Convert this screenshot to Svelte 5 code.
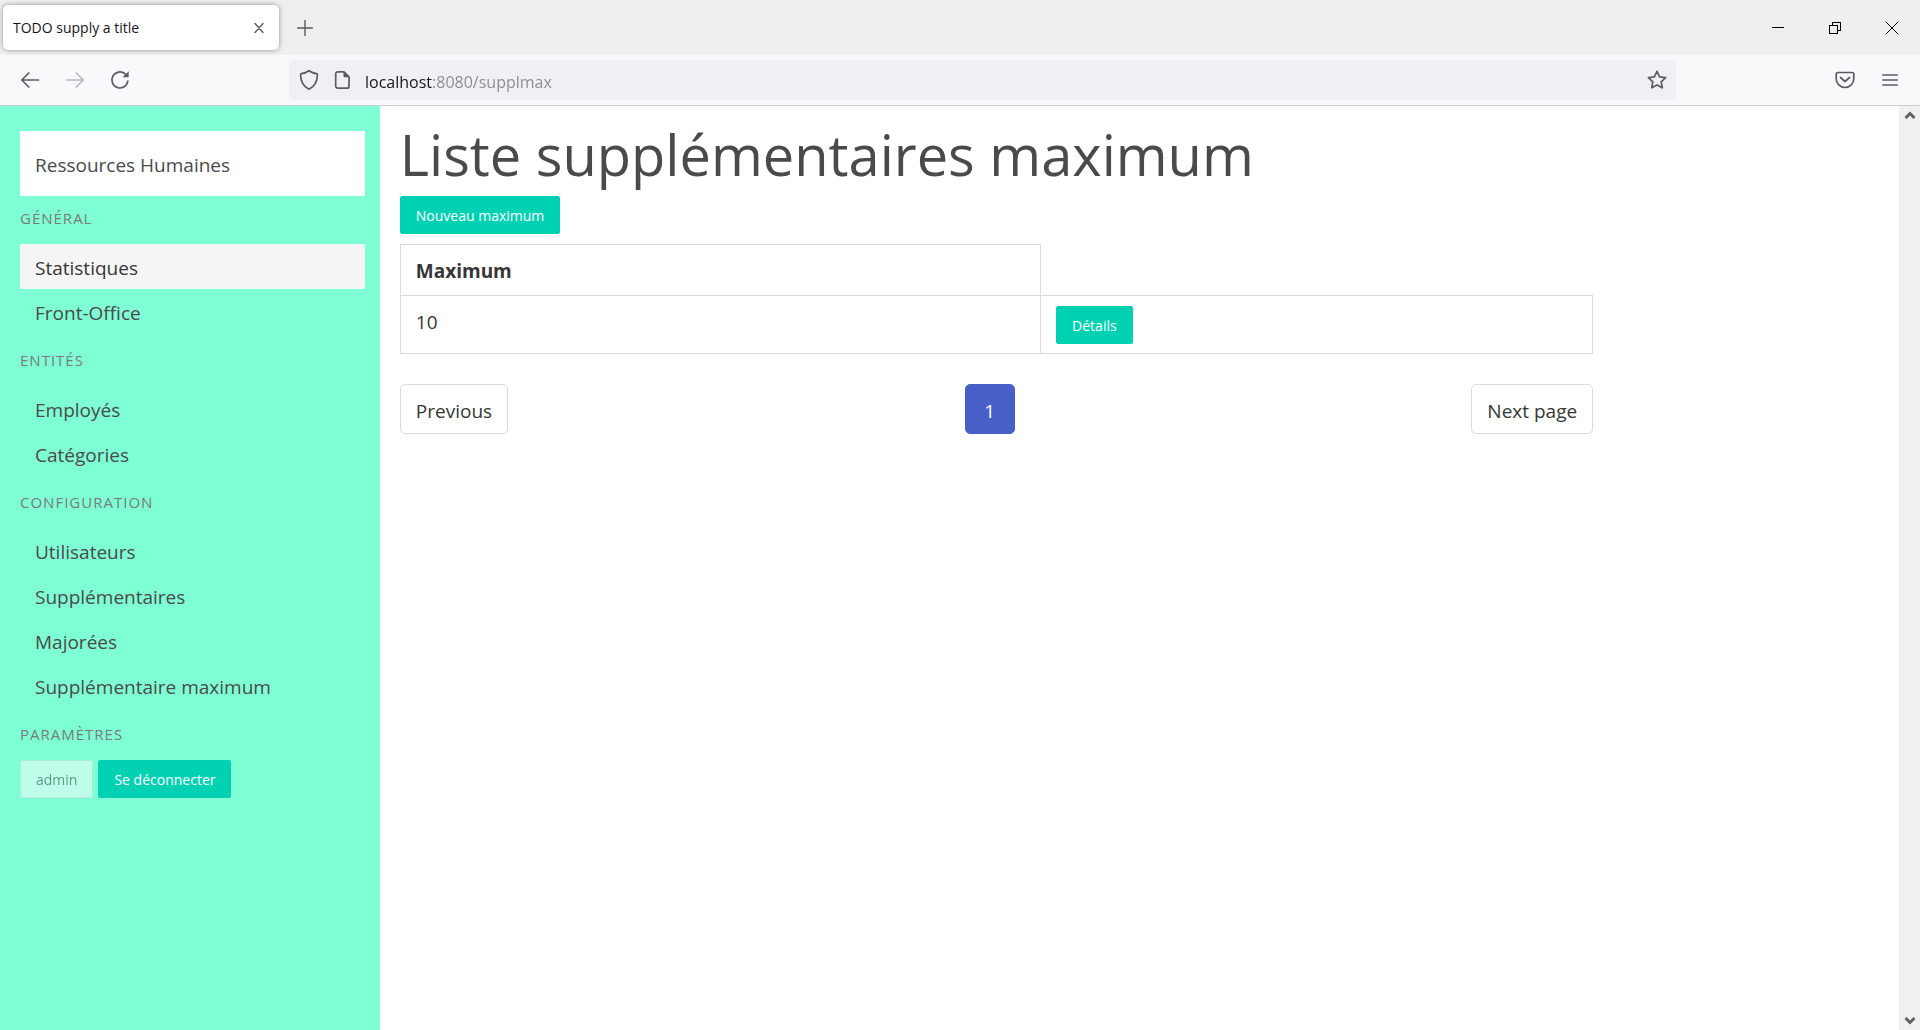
<script>
  const groups = [
    { title: 'Général', items: ['Statistiques', 'Front-Office'] },
    { title: 'Entités', items: ['Employés', 'Catégories'] },
    {
      title: 'Configuration',
      items: ['Utilisateurs', 'Supplémentaires', 'Majorées', 'Supplémentaire maximum'],
    },
  ];
  const rows = [10];
  let active = $state('Statistiques');
  let address = $state('localhost:8080/supplmax');
</script>

<div class="browser">
  <header class="tabstrip">
    <div class="tab">
      <span>TODO supply a title</span>
      <button class="icon" aria-label="Close tab">
        <svg width="10" height="10" viewBox="0 0 10 10"><path d="M1 .5l8 9M9 .5l-8 9" /></svg>
      </button>
    </div>
    <button class="icon plus" aria-label="New tab">
      <svg width="16" height="16" viewBox="0 0 16 16"><path d="M8 .5v15M.5 8h15" /></svg>
    </button>
    <div class="window-controls">
      <button class="icon" aria-label="Minimize">
        <svg width="14" height="14" viewBox="0 0 14 14" shape-rendering="crispEdges"><path d="M1 6.500h12" /></svg>
      </button>
      <button class="icon" aria-label="Restore">
        <svg width="14" height="14" viewBox="0 0 14 14" shape-rendering="crispEdges"><path d="M1.500 4.500h8v8h-8zM4.500 4.500v-3h8v8h-3" /></svg>
      </button>
      <button class="icon" aria-label="Close window">
        <svg width="14" height="14" viewBox="0 0 14 14"><path d="M.7.700l12.600 12.600M13.300.7L.7 13.300" /></svg>
      </button>
    </div>
  </header>

  <nav class="toolbar" aria-label="Browser">
    <button class="icon" aria-label="Back">
      <svg width="20" height="20" viewBox="0 0 20 20"><path d="M18.500 10H1.800M8.800 3l-7 7 7 7" /></svg>
    </button>
    <button class="icon" aria-label="Forward" disabled>
      <svg width="20" height="20" viewBox="0 0 20 20"><path d="M1.500 10h16.700M11.200 3l7 7-7 7" /></svg>
    </button>
    <button class="icon" aria-label="Reload">
      <svg width="20" height="20" viewBox="0 0 20 20">
        <path d="M17.800 11a8 8 0 1 1-2.600-7" /><path class="fill" d="M18.700 1.200v6.100h-6.100z" />
      </svg>
    </button>
    <label class="urlbar">
      <svg width="20" height="22" viewBox="0 0 20 22">
        <path d="M10 1.800c2.300 1.600 5 2.600 7.600 2.900.6.100.8.500.8 1 0 6.300-2.200 11.300-8.400 14.600C3.800 17 1.600 12 1.600 5.700c0-.5.200-.9.800-1C5 4.400 7.700 3.400 10 1.800z" />
      </svg>
      <svg width="16" height="20" viewBox="0 0 16 20">
        <path d="M3.700 1.800h6.300l5 5v9.400a2 2 0 0 1-2 2H3.700a2 2 0 0 1-2-2V3.800a2 2 0 0 1 2-2z" /><path class="fill" d="M9.500 1.800l5.500 5.500h-4.500a1 1 0 0 1-1-1z" />
      </svg>
      <input type="text" aria-label="Address" bind:value={address} spellcheck="false" />
      <svg width="20" height="20" viewBox="0 0 20 20">
        <path d="M10 1.300l2.600 5.500 6 .8-4.400 4.200 1.100 6-5.300-2.900-5.300 2.900 1.100-6L1.400 7.600l6-.8z" />
      </svg>
    </label>
    <div class="tools">
      <button class="icon" aria-label="Save to Pocket">
        <svg width="20" height="18" viewBox="0 0 20 18">
          <path d="M3 1.500h14a1.800 1.800 0 0 1 1.800 1.800v4.400a8.800 8.800 0 0 1-17.600 0V3.300A1.800 1.800 0 0 1 3 1.500zM5.500 6.500l4.500 4 4.500-4" />
        </svg>
      </button>
      <button class="icon" aria-label="Menu">
        <svg width="16" height="16" viewBox="0 0 16 16"><path d="M.8 3h14.400M.8 8h14.400M.8 13h14.400" /></svg>
      </button>
    </div>
  </nav>

  <div class="viewport">
    <div class="page">
      <aside class="sidebar">
        <div class="brand">Ressources Humaines</div>
        {#each groups as group}
          <p class="label">{group.title}</p>
          <ul>
            {#each group.items as item}
              <li>
                <a href="#{item}" class:active={item === active} onclick={() => (active = item)}>{item}</a>
              </li>
            {/each}
          </ul>
        {/each}
        <p class="label">Paramètres</p>
        <div class="account">
          <button class="button user" disabled>admin</button>
          <button class="button">Se déconnecter</button>
        </div>
      </aside>

      <main>
        <h1>Liste supplémentaires maximum</h1>
        <button class="button">Nouveau maximum</button>
        <table>
          <thead>
            <tr><th scope="col">Maximum</th></tr>
          </thead>
          <tbody>
            {#each rows as row}
              <tr>
                <td>{row}</td>
                <td><button class="button">Détails</button></td>
              </tr>
            {/each}
          </tbody>
        </table>
        <nav class="pagination" aria-label="Pagination">
          <a href="#previous">Previous</a>
          <a href="#page-1" class="current" aria-current="page">1</a>
          <a href="#next">Next page</a>
        </nav>
      </main>
    </div>
    <div class="scrollbar" aria-hidden="true">
      <svg width="12" height="10" viewBox="0 0 12 10"><path d="M1.500 8L6 3.500 10.500 8" /></svg>
      <svg width="12" height="10" viewBox="0 0 12 10"><path d="M1.500 2L6 6.500 10.500 2" /></svg>
    </div>
  </div>
</div>

<style>
  :global(body) {
    background: #fff;
  }
  .browser,
  .browser * {
    box-sizing: border-box;
  }
  .browser {
    display: flex;
    flex-direction: column;
    min-height: 100vh;
    font-family: 'Open Sans', 'Noto Sans', sans-serif;
    font-size: 19px;
    line-height: 30px;
    color: #4a4a4a;
  }
  button,
  input {
    font: inherit;
  }
  svg {
    display: block;
    flex: none;
    fill: none;
    stroke: #5b5b66;
    stroke-width: 1.7;
    stroke-linecap: round;
    stroke-linejoin: round;
  }
  .fill {
    fill: #5b5b66;
    stroke: none;
  }
  .icon {
    display: grid;
    place-items: center;
    padding: 0;
    border: 0;
    background: none;
  }
  .icon:disabled {
    opacity: 0.4;
  }

  .tabstrip {
    display: flex;
    align-items: center;
    height: 55px;
    padding-left: 3px;
    background: #efefef;
  }
  .tab {
    display: flex;
    align-items: center;
    justify-content: space-between;
    width: 276px;
    height: 45px;
    padding: 0 15px 0 10px;
    border-radius: 5px;
    background: #fff;
    box-shadow: 0 0 5px rgba(0, 0, 0, 0.4);
    font-size: 14px;
    color: #15141a;
  }
  .tab svg,
  .plus svg {
    stroke-width: 1.4;
  }
  .plus {
    margin-left: 18px;
  }
  .window-controls {
    display: flex;
    margin-left: auto;
  }
  .window-controls .icon {
    width: 57px;
    height: 55px;
  }
  .window-controls svg {
    stroke: #000;
    stroke-width: 1;
    stroke-linecap: butt;
    stroke-linejoin: miter;
  }

  .toolbar {
    display: flex;
    align-items: center;
    height: 51px;
    padding: 0 8px 0 7px;
    border-bottom: 1px solid #ccccd0;
    background: #f9f9fb;
  }
  .toolbar .icon {
    width: 45px;
    height: 40px;
  }
  .urlbar {
    display: flex;
    flex: 1;
    align-items: center;
    gap: 15px;
    height: 40px;
    margin: 0 146px 0 147px;
    padding: 0 9px 0 10px;
    border-radius: 5px;
    background: #f0f0f4;
  }
  .urlbar input {
    flex: 1;
    min-width: 0;
    padding: 3px 0 0;
    border: 0;
    outline: 0;
    background: linear-gradient(90deg, #15141a 67px, #8a8a90 67px);
    background-clip: text;
    color: transparent;
    font-size: 16px;
  }
  .tools {
    display: flex;
  }

  .viewport,
  .page {
    display: flex;
    flex: 1;
  }
  .sidebar {
    width: 20%;
    padding: 25px 15px 25px 20px;
    background: #7fffd4;
  }
  .brand {
    margin-bottom: 11px;
    padding: 19px 15px 16px;
    background: #fff;
  }
  .label {
    margin: 15px 0;
    font-size: 15px;
    line-height: 22px;
    letter-spacing: 1px;
    text-transform: uppercase;
    color: #7a7a7a;
  }
  .brand + .label {
    margin-top: 0;
  }
  ul {
    margin: 0;
    padding: 0;
    list-style: none;
  }
  .sidebar a {
    display: block;
    padding: 9px 15px 6px;
    border-radius: 2px;
    color: #4a4a4a;
    text-decoration: none;
  }
  .sidebar a.active {
    background: #f5f5f5;
    color: #363636;
  }
  .account {
    display: flex;
    gap: 5px;
  }
  .button {
    height: 38px;
    padding: 1px 15px 0;
    border: 1px solid #00d1b2;
    border-radius: 2px;
    background: #00d1b2;
    font-size: 14px;
    line-height: 22px;
    color: #fff;
  }
  .button.user {
    border-color: #dbdbdb;
    background: #fff;
    opacity: 0.5;
    color: #363636;
  }

  main {
    width: calc(63% - 3px);
    margin-left: 20px;
    padding-top: 15px;
  }
  h1 {
    margin: 0 0 8px;
    font-size: 56px;
    font-weight: 400;
    line-height: 67px;
    white-space: nowrap;
  }
  table {
    width: 100%;
    margin-top: 10px;
    border-collapse: collapse;
    color: #363636;
  }
  th,
  td {
    padding: 11px 15px 9px;
    border: 1px solid #dbdbdb;
    text-align: left;
    vertical-align: top;
  }
  th {
    width: 53.7%;
    font-weight: 700;
  }
  td:has(.button) {
    padding: 10px 15px 9px;
  }
  td .button {
    display: block;
  }
  .pagination {
    display: flex;
    justify-content: space-between;
    margin-top: 30px;
  }
  .pagination a {
    min-width: 50px;
    padding: 11px 15px 7px;
    border: 1px solid #dbdbdb;
    border-radius: 5px;
    text-align: center;
    text-decoration: none;
    color: #363636;
  }
  .pagination .current {
    border-color: #485fc7;
    background: #485fc7;
    color: #fff;
  }
  .scrollbar {
    display: flex;
    flex-direction: column;
    align-items: center;
    justify-content: space-between;
    width: 21px;
    padding: 4px 0;
    background: #f0f0f0;
  }
  .scrollbar svg {
    stroke: #606060;
    stroke-width: 3;
    stroke-linecap: butt;
    stroke-linejoin: miter;
  }
</style>
